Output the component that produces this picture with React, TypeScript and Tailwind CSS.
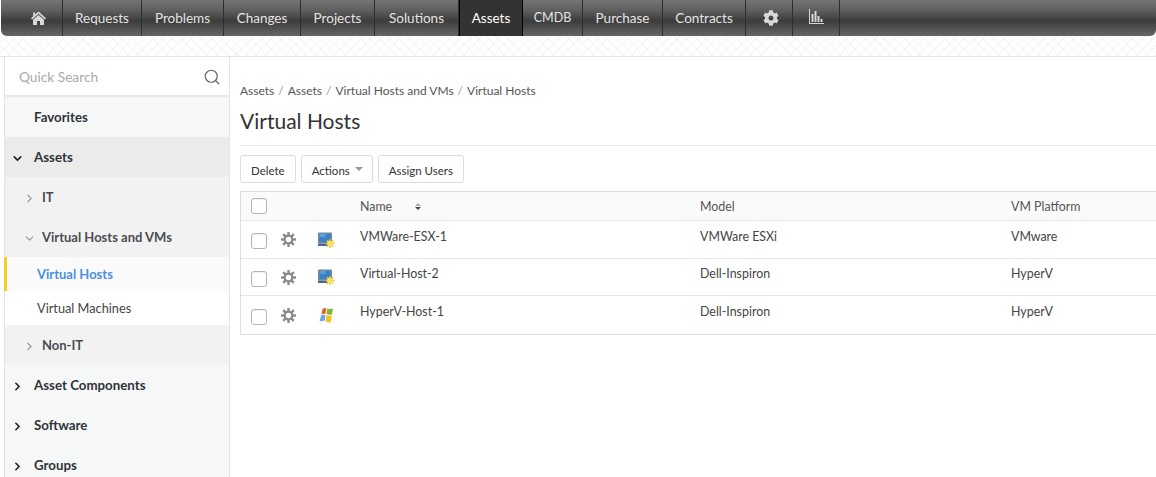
import React from 'react';
import { Search, ChevronRight, ChevronDown } from 'lucide-react';
import { FaCog } from 'react-icons/fa';

// nav items, widths measured from the divider positions
const navItems = [
  { label: 'Requests', w: 'w-[79px]' },
  { label: 'Problems', w: 'w-[82px]' },
  { label: 'Changes', w: 'w-[77px]' },
  { label: 'Projects', w: 'w-[74px]' },
  { label: 'Solutions', w: 'w-[84px]' },
  { label: 'Assets', w: 'w-[64px]', active: true },
  { label: 'CMDB', w: 'w-[60px]', narrow: true },
  { label: 'Purchase', w: 'w-[80px]' },
  { label: 'Contracts', w: 'w-[83px]' },
];

const rows = [
  { name: 'VMWare-ESX-1', model: 'VMWare ESXi', platform: 'VMware', icon: 'host', h: 'h-[38px]', lift: '-mt-[4px]' },
  { name: 'Virtual-Host-2', model: 'Dell-Inspiron', platform: 'HyperV', icon: 'host', h: 'h-[37px]', lift: '-mt-[6px]' },
  { name: 'HyperV-Host-1', model: 'Dell-Inspiron', platform: 'HyperV', icon: 'win', h: 'h-[38px]', lift: '-mt-[6px]' },
];

function HomeIcon() {
  return (
    <svg width="15" height="14" viewBox="0 0 15 14">
      <path d="M7.5 0.5 L15 7.2 L13.8 8.4 L7.5 2.8 L1.2 8.4 L0 7.2 L2.2 5.2 V1.5 H4.2 V3.4 Z" fill="#d8d8d8" />
      <path d="M7.5 4 L13 8.8 V14 H9 V10 H6 V14 H2 V8.8 Z" fill="#d8d8d8" />
    </svg>
  );
}

function ChartIcon() {
  return (
    <svg width="15" height="15" viewBox="0 0 15 15" fill="#d8d8d8">
      <rect x="0" y="0" width="1" height="15" />
      <rect x="0" y="14" width="15" height="1" />
      <rect x="2.5" y="5" width="2" height="8" />
      <rect x="5.5" y="2" width="2" height="11" />
      <rect x="8.5" y="7" width="2" height="6" />
      <rect x="11.5" y="10" width="2" height="3" />
    </svg>
  );
}

// row gear: ring with a wide hole and eight short teeth
function RowGear() {
  return (
    <svg width="15" height="15" viewBox="0 0 15 15" className="block">
      <g stroke="#8a8a8a" strokeWidth="2.4">
        <line x1="7.5" y1="0" x2="7.5" y2="15" />
        <line x1="0" y1="7.5" x2="15" y2="7.5" />
        <line x1="2.2" y1="2.2" x2="12.8" y2="12.8" />
        <line x1="12.8" y1="2.2" x2="2.2" y2="12.8" />
      </g>
      <circle cx="7.5" cy="7.5" r="4.9" fill="#8a8a8a" />
      <circle cx="7.5" cy="7.5" r="2.7" fill="#ffffff" />
    </svg>
  );
}

function HostIcon() {
  return (
    <svg width="17" height="16" viewBox="0 0 17 16" className="block">
      <rect x="0" y="0.5" width="14" height="11" rx="1" fill="#7187a6" />
      <rect x="1.5" y="2" width="11" height="8" fill="#3b82c4" />
      <rect x="1.5" y="2" width="6" height="3" fill="#5aa0d8" />
      <rect x="0" y="11.5" width="12" height="2.5" fill="#54698a" />
      <g stroke="#e3bd22" strokeWidth="1.3">
        <line x1="12" y1="7" x2="12" y2="16" />
        <line x1="7.5" y1="11.5" x2="16.5" y2="11.5" />
        <line x1="8.8" y1="8.3" x2="15.2" y2="14.7" />
        <line x1="15.2" y1="8.3" x2="8.8" y2="14.7" />
      </g>
      <circle cx="12" cy="11.5" r="3" fill="#f8e063" />
    </svg>
  );
}

function WinIcon() {
  return (
    <svg width="16" height="16" viewBox="0 0 16 16" className="block">
      <path d="M4.5 2 Q6 0.8 8.3 1 L7.6 6.8 Q5.5 6.4 3.4 7.6 Z" fill="#e2622b" />
      <path d="M9.2 1.4 Q12 2.6 15 1.6 L14 7.4 Q11 8 8.6 7 Z" fill="#86b52f" />
      <path d="M3.1 8.6 Q5.2 7.6 7.4 7.9 L6.8 13.8 Q4 13.4 1.6 14.6 Z" fill="#6aa9e0" />
      <path d="M8.4 8 Q11 9 13.8 8.4 L12.6 15.4 Q10 15.6 7.8 14.4 Z" fill="#f2c417" />
    </svg>
  );
}

function Checkbox() {
  return <span className="block w-4 h-4 bg-white border border-[#b5b5b5] rounded-[3px] shadow-[inset_0_1px_1px_rgba(0,0,0,0.06)]" />;
}

function TopRow({ label, open, dark }: { label: string; open?: boolean; dark?: boolean }) {
  return (
    <div className={`h-10 flex items-center pl-[6px] pt-[2px] text-[13.3px] font-bold text-[#2f3238] ${dark ? 'bg-[#ebebeb]' : ''}`}>
      <span className="w-[23px] flex">
        {open ? <ChevronDown size={13} strokeWidth={3} color="#222" /> : <ChevronRight size={13} strokeWidth={3} color="#222" />}
      </span>
      {label}
    </div>
  );
}

function SubRow({ label, open }: { label: string; open?: boolean }) {
  return (
    <div className="h-10 flex items-center pl-[18px] pt-[2px] font-bold text-[#4a4d52] bg-[#f2f2f2]">
      <span className="w-[19px] flex">
        {open ? <ChevronDown size={13} strokeWidth={2} color="#999" /> : <ChevronRight size={13} strokeWidth={2} color="#999" />}
      </span>
      {label}
    </div>
  );
}

export default function App() {
  return (
    <div className="w-[1156px] h-[477px] overflow-hidden bg-white text-[13px] text-[#444] font-['Lato','Noto_Sans',sans-serif]">
      {/* Top nav */}
      <div className="h-9 ml-px flex rounded-b-[6px] overflow-hidden bg-[linear-gradient(#747474_0%,#5d5d5d_30%,#3c3c3c_58%,#666666_100%)] text-[13.5px] text-[#e4e4e4]">
        <div className="w-[62px] flex items-center justify-end pr-4 border-r border-[#2e2e2e]">
          <HomeIcon />
        </div>
        {navItems.map((item) => (
          <div
            key={item.label}
            className={`${item.w} flex items-center justify-center ${item.narrow ? 'text-[12.5px]' : ''} ${item.active ? 'bg-[#333333] text-white border-x border-black' : 'border-r border-[#2e2e2e]'}`}
          >
            {item.label}
          </div>
        ))}
        <div className="w-[47px] flex items-center justify-center pl-1 border-r border-[#2e2e2e]">
          <FaCog size={16} color="#d8d8d8" />
        </div>
        <div className="w-[47px] flex items-center justify-center pb-1 border-r border-[#2e2e2e]">
          <ChartIcon />
        </div>
      </div>

      {/* Pattern strip */}
      <div className="h-[21px] border-b border-[#e5e5e5] bg-[repeating-linear-gradient(45deg,#f6f6f6_0,#f6f6f6_1px,#ffffff_1px,#ffffff_7px),repeating-linear-gradient(-45deg,#f6f6f6_0,#f6f6f6_1px,transparent_1px,transparent_7px)] bg-blend-multiply" />

      <div className="flex">
        {/* Sidebar */}
        <div className="w-[226px] ml-[4px] shrink-0 bg-[#f6f8f8] border-r border-[#e5e5e5] border-l border-l-[#e5e5e5]">
          <div className="h-10 flex items-center justify-between pl-[14px] pt-[2px] pr-2 bg-white border-b-2 border-[#e4e9ef] text-[13.7px] text-[#aaa]">
            Quick Search
            <Search size={18} strokeWidth={1.6} color="#666" />
          </div>
          <div className="h-10 flex items-center pl-[29px] pt-[2px] text-[13.3px] font-bold text-[#2f3238]">Favorites</div>
          <TopRow label="Assets" open dark />
          <SubRow label="IT" />
          <SubRow label="Virtual Hosts and VMs" open />
          <div className="h-[34px] -ml-px flex items-center pl-[30px] pt-[2px] font-bold text-[#4a90e2] bg-[#fafafa] border-l-[3px] border-[#f5cf1f]">
            Virtual Hosts
          </div>
          <div className="h-[34px] flex items-center pl-8 pt-[2px] text-[12.75px] bg-white text-[#444]">Virtual Machines</div>
          <SubRow label="Non-IT" />
          <TopRow label="Asset Components" />
          <TopRow label="Software" />
          <TopRow label="Groups" />
        </div>

        {/* Main content */}
        <div className="flex-1 min-w-0 pl-[10px]">
          <div className="mt-[27px] h-[14px] flex items-center gap-[4px] text-[12px] text-[#555]">
            <span>Assets</span>
            <span className="text-[#999]">/</span>
            <span>Assets</span>
            <span className="text-[#999]">/</span>
            <span>Virtual Hosts and VMs</span>
            <span className="text-[#999]">/</span>
            <span>Virtual Hosts</span>
          </div>
          <div className="mt-[7px] h-[31px] flex items-center text-[21px] text-[#333]">Virtual Hosts</div>
          <div className="mt-[9px] border-t border-[#e8e8e8]" />
          <div className="mt-[9px] flex gap-[5px] text-[11.5px] text-[#333]">
            <div className="h-7 px-[10px] pt-[3px] flex items-center bg-white border border-[#dcdcdc] rounded-[3px]">Delete</div>
            <div className="h-7 w-[72px] pl-[10px] flex items-center gap-[5px] bg-white border border-[#dcdcdc] rounded-[3px]">
              <span className="pt-[3px]">Actions</span>
              <span className="w-0 h-0 border-x-[4px] border-x-transparent border-t-[4px] border-t-[#999]" />
            </div>
            <div className="h-7 px-[10px] pt-[3px] flex items-center bg-white border border-[#dcdcdc] rounded-[3px]">Assign Users</div>
          </div>

          {/* Table */}
          <div className="mt-2 border border-r-0 border-[#dedede] text-[12.4px]">
            <div className="h-[29px] flex items-center border-b border-[#e5e5e5] bg-[#fafafa] text-[#555]">
              <span className="ml-[10px] w-[109px]"><Checkbox /></span>
              <span className="w-[340px] pt-[2px] flex items-center">
                Name
                <span className="ml-[23px] flex flex-col gap-px">
                  <span className="w-0 h-0 border-x-[3px] border-x-transparent border-b-[3px] border-b-[#aab0a0]" />
                  <span className="w-0 h-0 border-x-[3px] border-x-transparent border-t-[3px] border-t-[#444]" />
                </span>
              </span>
              <span className="w-[311px] pt-[2px]">Model</span>
              <span className="pt-[2px]">VM Platform</span>
            </div>
            {rows.map((row, i) => (
              <div key={row.name} className={`${row.h} flex items-center text-[#444] ${i < rows.length - 1 ? 'border-b border-[#e5e5e5]' : ''}`}>
                <span className="ml-[10px] w-[30px] pt-[3px]"><Checkbox /></span>
                <span className="w-[37px]"><RowGear /></span>
                <span className="w-[42px]">{row.icon === 'host' ? <HostIcon /> : <WinIcon />}</span>
                <span className={`w-[340px] ${row.lift}`}>{row.name}</span>
                <span className={`w-[311px] ${row.lift}`}>{row.model}</span>
                <span className={row.lift}>{row.platform}</span>
              </div>
            ))}
          </div>
        </div>
      </div>
    </div>
  );
}
